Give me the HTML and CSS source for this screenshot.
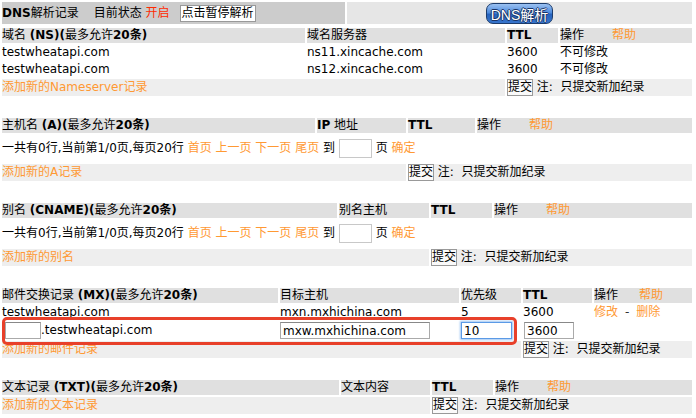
FILE: index.html
```html
<!DOCTYPE html>
<html lang="zh-CN">
<head>
    <meta charset="UTF-8">
    <title>DNS解析记录</title>
    <link rel="stylesheet" href="styles.css">
</head>
<body>
    <!-- 顶部状态栏 -->
    <table class="bar">
        <tr>
            <td class="bar-left">
                <b>DNS</b>解析记录<span class="state">目前状态</span> <span class="on">开启</span><button class="pause">点击暂停解析</button>
            </td>
            <td class="bar-right"><button class="dns-btn">DNS解析</button></td>
        </tr>
    </table>

    <!-- NS 记录 -->
    <table class="rec ns">
        <tr>
            <th class="c1">域名 <b>(NS)(</b>最多允许<b>20条)</b></th>
            <th class="c2">域名服务器</th>
            <th class="c3"><b>TTL</b></th>
            <th class="c4">操作<a class="help" href="#">帮助</a></th>
        </tr>
        <tr>
            <td>testwheatapi.com</td>
            <td>ns11.xincache.com</td>
            <td>3600</td>
            <td>不可修改</td>
        </tr>
        <tr>
            <td>testwheatapi.com</td>
            <td>ns12.xincache.com</td>
            <td>3600</td>
            <td>不可修改</td>
        </tr>
        <tr class="add">
            <td colspan="2"><a href="#">添加新的Nameserver记录</a></td>
            <td colspan="2"><button class="submit">提交</button> 注:&nbsp; 只提交新加纪录</td>
        </tr>
    </table>

    <!-- A 记录 -->
    <table class="rec a">
        <tr>
            <th class="c1">主机名 <b>(A)(</b>最多允许<b>20条)</b></th>
            <th class="c2"><b>IP</b> 地址</th>
            <th class="c3"><b>TTL</b></th>
            <th class="c4">操作<a class="help" href="#">帮助</a></th>
        </tr>
        <tr>
            <td colspan="4" class="pager">一共有0行,当前第1/0页,每页20行 <a href="#">首页</a> <a href="#">上一页</a> <a href="#">下一页</a> <a href="#">尾页</a> 到 <input class="page-input" type="text"> 页 <a href="#">确定</a></td>
        </tr>
        <tr class="add">
            <td colspan="2"><a href="#">添加新的A记录</a></td>
            <td colspan="2"><button class="submit">提交</button> 注:&nbsp; 只提交新加纪录</td>
        </tr>
    </table>

    <!-- CNAME 记录 -->
    <table class="rec cname">
        <tr>
            <th class="c1">别名 <b>(CNAME)(</b>最多允许<b>20条)</b></th>
            <th class="c2">别名主机</th>
            <th class="c3"><b>TTL</b></th>
            <th class="c4">操作<a class="help" href="#">帮助</a></th>
        </tr>
        <tr>
            <td colspan="4" class="pager">一共有0行,当前第1/0页,每页20行 <a href="#">首页</a> <a href="#">上一页</a> <a href="#">下一页</a> <a href="#">尾页</a> 到 <input class="page-input" type="text"> 页 <a href="#">确定</a></td>
        </tr>
        <tr class="add">
            <td colspan="2"><a href="#">添加新的别名</a></td>
            <td colspan="2"><button class="submit">提交</button> 注:&nbsp; 只提交新加纪录</td>
        </tr>
    </table>

    <!-- MX 记录 -->
    <div class="mx-wrap">
        <table class="rec mx">
            <tr>
                <th class="c1">邮件交换记录 <b>(MX)(</b>最多允许<b>20条)</b></th>
                <th class="c2">目标主机</th>
                <th class="c3">优先级</th>
                <th class="c4"><b>TTL</b></th>
                <th class="c5">操作<a class="help" href="#">帮助</a></th>
            </tr>
            <tr>
                <td>testwheatapi.com</td>
                <td>mxn.mxhichina.com</td>
                <td>5</td>
                <td>3600</td>
                <td><a href="#">修改</a><span class="sep">-</span><a href="#">删除</a></td>
            </tr>
            <tr class="edit">
                <td><input class="sub" type="text">.testwheatapi.com</td>
                <td><input class="host" type="text" value="mxw.mxhichina.com"></td>
                <td><input class="prio focus" type="text" value="10"></td>
                <td><input class="ttl" type="text" value="3600"></td>
                <td></td>
            </tr>
            <tr class="add">
                <td colspan="3"><a href="#">添加新的邮件记录</a></td>
                <td colspan="2"><button class="submit">提交</button> 注:&nbsp; 只提交新加纪录</td>
            </tr>
        </table>
        <div class="highlight"></div>
    </div>

    <!-- TXT 记录 -->
    <table class="rec txt">
        <tr>
            <th class="c1">文本记录 <b>(TXT)(</b>最多允许<b>20条)</b></th>
            <th class="c2">文本内容</th>
            <th class="c3"><b>TTL</b></th>
            <th class="c4">操作<a class="help" href="#">帮助</a></th>
        </tr>
        <tr class="add">
            <td colspan="2"><a href="#">添加新的文本记录</a></td>
            <td colspan="2"><button class="submit">提交</button> 注:&nbsp; 只提交新加纪录</td>
        </tr>
    </table>
</body>
</html>
```

FILE: styles.css
```css
body {
    margin: 0;
    font-family: "DejaVu Sans", "Noto Sans CJK SC", sans-serif;
    font-size: 12px;
    color: #000;
    background: #fff;
}
a {
    color: #ff9933;
    text-decoration: none;
}
table {
    width: 694px;
    border-spacing: 2px;
    table-layout: fixed;
}
th, td {
    padding: 0;
    text-align: left;
    font-weight: normal;
    line-height: 15px;
    height: 15px;
    white-space: nowrap;
    vertical-align: middle;
}
button, input {
    font-family: "DejaVu Sans", "Noto Sans CJK SC", sans-serif;
    font-size: 12px;
}

/* 顶部状态栏 */
.bar td {
    height: 22px;
}
.bar-left {
    width: 343px;
    background: #cccccc;
}
.bar-right {
    width: 345px;
    background: #e6e6e6;
    text-align: center;
}
.state {
    margin-left: 15px;
}
.on {
    color: #ff2a00;
}
.pause {
    margin-left: 10px;
    padding: 0 1px;
    height: 17px;
    line-height: 15px;
    border: 1px solid #999;
    background: #fff;
    vertical-align: middle;
}
.dns-btn {
    height: 21px;
    padding: 0 4px;
    margin-top: 1px;
    font-size: 14px;
    font-family: "Liberation Sans", "Noto Sans CJK SC", sans-serif;
    color: #fff;
    border: 1px solid #1c3c6c;
    border-radius: 7px;
    background: linear-gradient(#9cc2f2, #4f8bdc 45%, #2763bd 55%, #3674cc);
    text-shadow: 1px 0 0 #1a3466, -1px 0 0 #1a3466, 0 1px 0 #1a3466, 0 -1px 0 #1a3466;
    vertical-align: middle;
}

/* 记录表 */
.rec {
    margin-top: 18px;
}
.ns {
    margin-top: 0;
}
.rec th {
    background: #e0e0e0;
}
.help {
    margin-left: 28px;
}
.mx .help {
    margin-left: 21px;
}
.add td {
    background: #eeeeee;
}
.submit {
    height: 17px;
    padding: 0;
    line-height: 15px;
    border: 1px solid #999;
    background: #fafafa;
    vertical-align: middle;
}
.pager {
    height: 27px;
}
.page-input {
    width: 33px;
    height: 19px;
    padding: 0;
    border: 1px solid #c8c8c8;
    box-sizing: border-box;
    vertical-align: middle;
}
.sep {
    margin: 0 7px;
    color: #333;
}

/* 列宽 */
.ns .c1 { width: 303px; }
.ns .c2 { width: 198px; }
.ns .c3 { width: 51px; }
.ns .c4 { width: 132px; }
.a .c1 { width: 313px; }
.a .c2 { width: 89px; }
.a .c3 { width: 67px; }
.a .c4 { width: 215px; }
.cname .c1 { width: 335px; }
.cname .c2 { width: 90px; }
.cname .c3 { width: 61px; }
.cname .c4 { width: 198px; }
.mx .c1 { width: 276px; }
.mx .c2 { width: 179px; }
.mx .c3 { width: 60px; }
.mx .c4 { width: 69px; }
.mx .c5 { width: 98px; }
.txt .c1 { width: 337px; }
.txt .c2 { width: 89px; }
.txt .c3 { width: 61px; }
.txt .c4 { width: 197px; }

/* MX 编辑行 */
.mx-wrap {
    position: relative;
}
.edit td {
    height: 17px;
}
.edit input {
    height: 17px;
    padding: 0 2px;
    border: 1px solid #aaa;
    border-top-color: #888;
    box-sizing: border-box;
    vertical-align: middle;
}
.sub {
    width: 36px;
    margin-left: 3px;
}
.host {
    width: 150px;
}
.prio {
    width: 51px;
}
.ttl {
    width: 50px;
    margin-left: 1px;
}
.focus {
    border: 1px solid #5b9ae6 !important;
    box-shadow: 0 0 2px 1px #9cc4f2;
    outline: none;
}
.highlight {
    position: absolute;
    left: 2px;
    top: 31px;
    width: 509px;
    height: 22px;
    border: 3px solid #e8402a;
    border-radius: 5px;
    pointer-events: none;
}
```
